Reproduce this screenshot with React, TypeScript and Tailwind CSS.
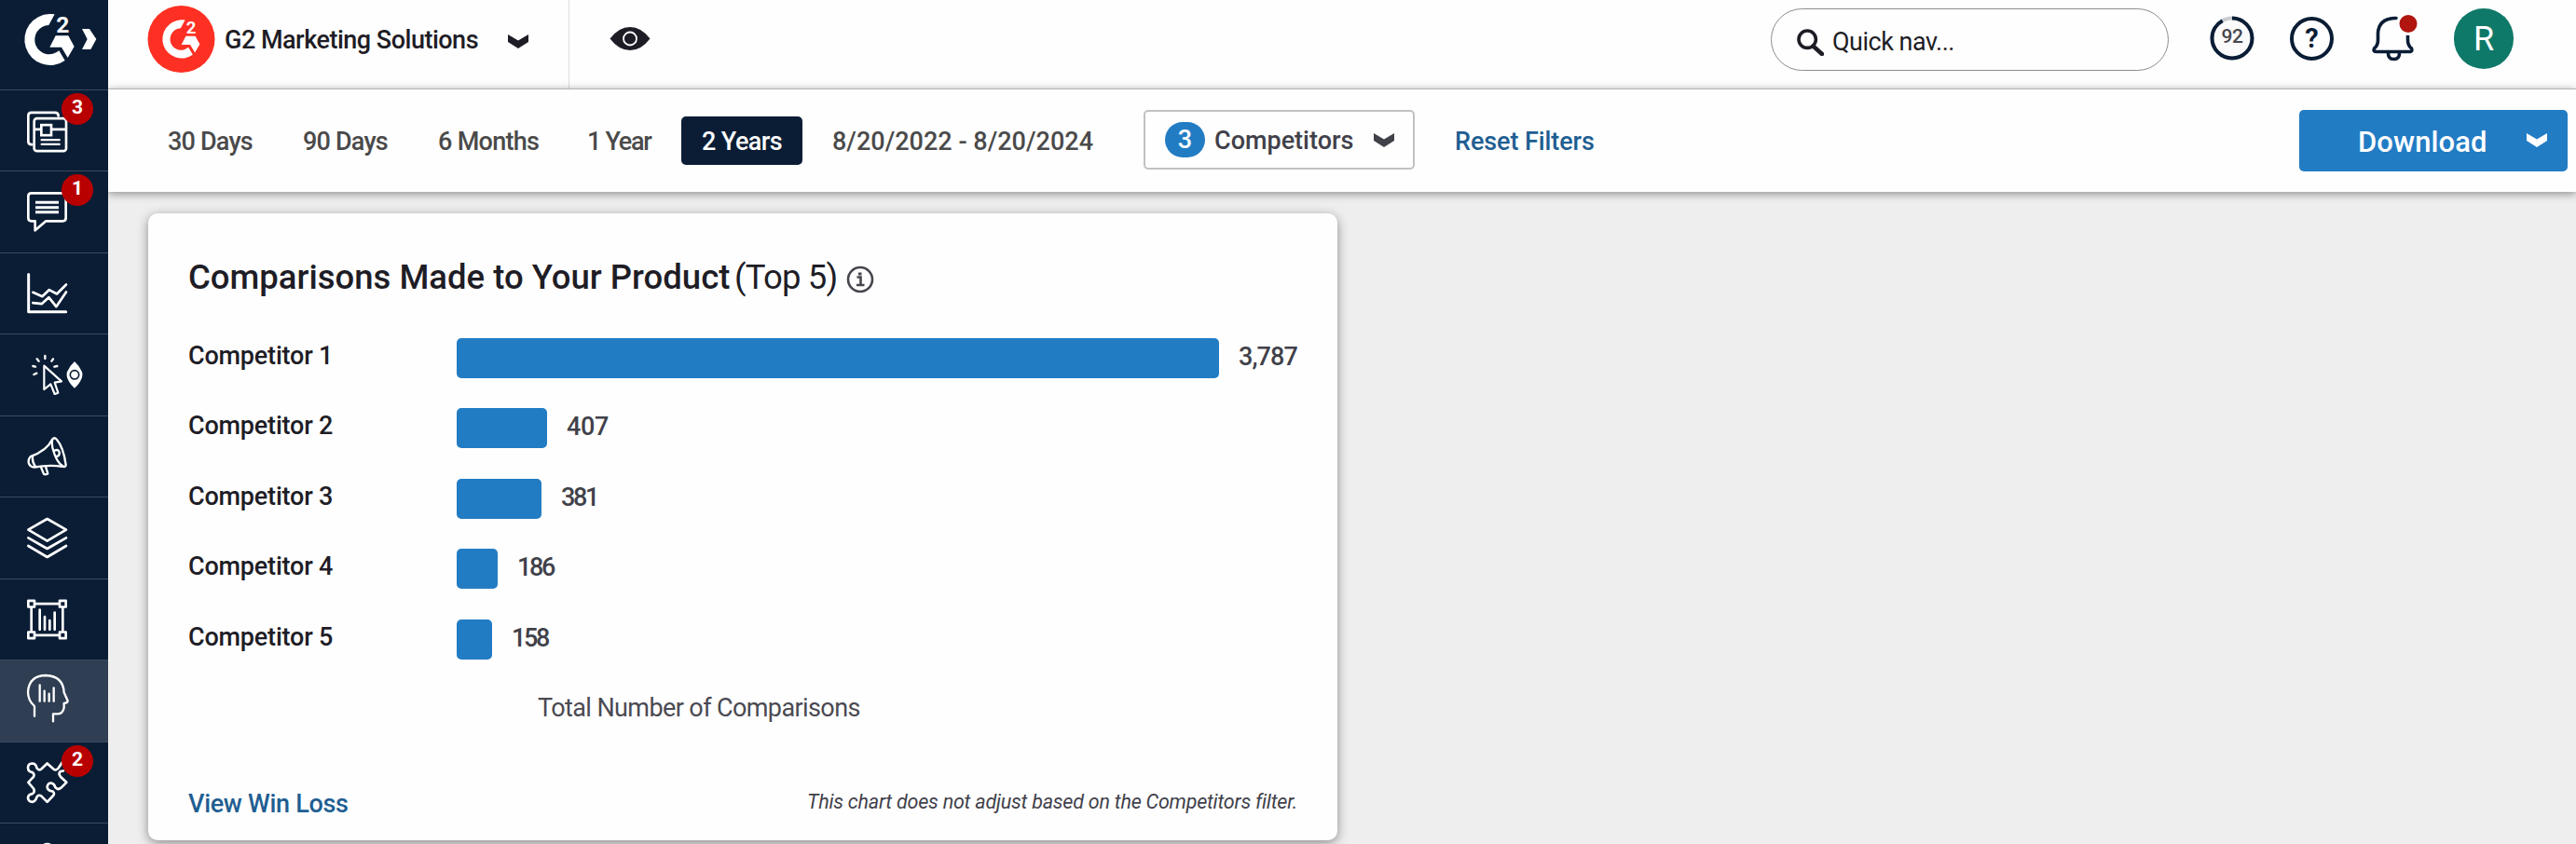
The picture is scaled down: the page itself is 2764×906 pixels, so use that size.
import React from "react";

type Kids = { children?: React.ReactNode };

const G2Mark = () => (
  <g fill="#fff">
    <path d="M176 45.5 L157 81 A47 47 0 1 0 190 163 L209 195 A82.5 82.5 0 1 1 160 45 Z" />
    <path d="M179 115 H220 L239 150 L218 186 L198 152 H160 Z" />
    <text x="181" y="104" fontFamily="Roboto" fontWeight="700" fontSize="74">2</text>
  </g>
);

const Chevron = ({ className }: { className: string }) => (
  <svg viewBox="0 0 22 15" className={className} fill="currentColor">
    <path d="M0 0 L11 6.5 L22 0 V8 L11 15 L0 8 Z" />
  </svg>
);

const line = {
  fill: "none",
  stroke: "#fff",
  strokeWidth: 8,
  strokeLinecap: "round" as const,
  strokeLinejoin: "round" as const,
};

const Item = ({ y, badge, active, children }: { y: number; badge?: string; active?: boolean } & Kids) => (
  <div className={`relative h-[87.5px] shrink-0 border-b border-[#3b4a5e] ${active ? "bg-[#2f3e53]" : ""}`}>
    <svg viewBox={`0 ${y} 348 262.5`} className="block h-[87.5px] w-[116px]">
      <g {...line}>{children}</g>
    </svg>
    {badge && (
      <span className="absolute left-[66px] top-[3px] flex h-[34px] w-[34px] items-center justify-center rounded-full bg-[#b90000] pb-[3px] text-[21px] leading-none font-bold text-white">
        {badge}
      </span>
    )}
  </div>
);

const Sidebar = () => (
  <nav className="flex h-[906px] w-[116px] shrink-0 flex-col overflow-hidden bg-[#0a1d35]">
    <div className="h-[96.5px] shrink-0 border-b border-[#3b4a5e]">
      <svg viewBox="0 0 348 288" className="block h-[96px] w-[116px]">
        <G2Mark />
        <path d="M264 93 H288 L310 126 L292 159 H264 L281 126 Z" fill="#fff" />
      </svg>
    </div>
    <Item y={289.5} badge="3">
      <path d="M103 464 H101 Q91 464 91 454 V371 Q91 361 101 361 H177 Q188 361 188 372" />
      <rect x="110" y="380" width="103" height="105" rx="9" />
      <path d="M112 415 H130 M168 415 H212" strokeLinecap="butt" />
      <rect x="133" y="401" width="32" height="33" strokeLinejoin="miter" />
      <path d="M134 449 H191 M134 463 H191" strokeWidth="7" />
    </Item>
    <Item y={552} badge="1">
      <path d="M101 622 H202 Q212 622 212 632 V702 Q212 712 202 712 H148 L113 742 V712 H101 Q91 712 91 702 V632 Q91 622 101 622 Z" />
      <path d="M114 652 H189 M114 668 H189 M114 683 H189" strokeLinecap="butt" strokeWidth="9" />
    </Item>
    <Item y={814.5}>
      <g transform="translate(0 810)">
        <path d="M92 72 V193 H212" strokeWidth="9" />
        <path d="M106 130 L136 143 L158 122 L183 135 L213 105 M106 164 L134 167 L157 146 L181 176 L213 129" />
      </g>
    </Item>
    <Item y={1077}>
      <g transform="translate(0 810)">
        <path d="M142 368 L198 418 L176 422 L187 455 L176 459 L163 427 L142 444 Z" strokeWidth="6.5" />
        <path d="M145 336 V345 M119 346 L125 353 M171 346 L166 353 M106 369 L114 371 M184 369 L175 371 M109 396 L118 392" strokeWidth="7" />
        <path d="M240 354 Q256 368 264 388 Q267 397 264 406 Q256 427 240 440 Q224 427 216 406 Q213 397 216 388 Q224 368 240 354 Z" fill="#fff" stroke="none" />
        <circle cx="240" cy="397" r="14" stroke="#0a1d35" strokeWidth="5" />
      </g>
    </Item>
    <Item y={1339.5}>
      <g transform="translate(0 810)" strokeWidth="7">
        <path d="M171 601 Q176 597 182 603 Q204 628 212 685 Q212 693 204 691 Q181 679 169 630 Q165 608 171 601 Z" />
        <path d="M168 604 Q151 640 98 659 Q89 670 93 682 Q99 694 111 693 Q160 684 200 691" />
        <path d="M105 658 Q103 678 114 691 M175 640 Q188 633 191 645 Q193 656 183 658 M132 693 L141 715 Q145 718 154 714 L147 691" />
      </g>
    </Item>
    <Item y={1602}>
      <path d="M152 1671 L213 1706 L152 1742 L91 1706 Z M91 1732 L152 1767 L213 1732 M91 1758 L152 1794 L213 1758" />
    </Item>
    <Item y={1864.5}>
      <g transform="translate(0 1758)">
        <path d="M114 185 H190 M114 286 H190 M101 199 V273 M202 199 V273" />
        <g strokeLinejoin="round">
          <rect x="91" y="175" width="20" height="20" />
          <rect x="192" y="175" width="20" height="20" />
          <rect x="91" y="276" width="20" height="20" />
          <rect x="192" y="276" width="20" height="20" />
        </g>
        <path d="M128 204 V268 M144 227 V268 M160 239 V268 M176 213 V268" />
      </g>
    </Item>
    <Item y={2127} active>
      <g transform="translate(0 1758)" strokeWidth="7">
        <path d="M111 548 V516 Q90 497 90 470 Q94 417 148 417 Q204 420 206 472 L218 499 Q218 506 206 507 V520 Q203 541 185 541 H171 V565" />
        <path d="M128 448 V500 M143 467 V500 M158 476 V500 M173 457 V500" />
      </g>
    </Item>
    <Item y={2389.5} badge="2">
      <path
        transform="translate(0 1758)"
        d="M200 696 L188 714 Q180 724 172 717 L152 699 L133 717 Q124 724 118 713 Q116 699 103 699 Q90 700 90 713 Q91 726 102 727 Q113 732 108 742 L91 760 L108 780 Q114 791 104 797 Q90 799 90 811 Q92 823 104 823 Q115 822 118 808 Q124 797 134 805 L152 823 L170 804 Q178 796 170 789 Q152 787 152 774 Q154 762 165 762 Q175 764 178 776 Q186 786 196 778 L214 760 L197 744 Q186 733 194 725 L204 723"
      />
    </Item>
    <Item y={2652}>
      <circle cx="152" cy="2736" r="18" />
    </Item>
  </nav>
);

const Header = () => (
  <header className="flex h-[95px] w-full items-start bg-[#fefefe] text-[#1e1d26]">
    <svg viewBox="0 0 72 72" className="mt-[6px] ml-[42px] h-[72px] w-[73px] shrink-0">
      <circle cx="36" cy="36" r="36" fill="#fe3023" />
      <g transform="translate(-3.9 4.1) scale(0.25)">
        <G2Mark />
      </g>
    </svg>
    <div className="mt-[23px] ml-[10px] w-[305px] text-[27px] leading-10 font-medium tracking-[-0.5px] whitespace-nowrap">
      G2 Marketing Solutions
    </div>
    <Chevron className="mt-[37px] -ml-[1px] h-[15px] w-[22px] shrink-0" />
    <div className="ml-[43px] h-[95px] w-px shrink-0 bg-[#dddddf]" />
    <svg viewBox="0 0 44 25" className="mt-[29px] ml-[43px] h-[25px] w-[44px] shrink-0">
      <path d="M0.5 12.5 Q10 0 22 0 Q34 0 43.5 12.5 Q34 25 22 25 Q10 25 0.500 12.5 Z" fill="#1e1d26" />
      <circle cx="22" cy="12.5" r="7" fill="none" stroke="#fff" strokeWidth="1.8" />
    </svg>
    <div className="mt-[9px] ml-auto flex h-[67px] w-[427px] shrink-0 items-center rounded-full border border-[#8d8d8f] pl-[27px]">
      <svg viewBox="0 0 29 29" className="mt-[5px] h-[29px] w-[29px]" fill="none" stroke="#1e1d26">
        <circle cx="11.200" cy="11.200" r="9.200" strokeWidth="3.600" />
        <path d="M17.500 18.500 L27 27" strokeWidth="4.500" strokeLinecap="round" />
      </svg>
      <span className="mt-[4px] ml-[9px] text-[27px] leading-10 tracking-[-0.5px]">Quick nav...</span>
    </div>
    <div className="relative mt-[17px] ml-[44px] h-[48px] w-[48px] shrink-0">
      <svg viewBox="0 0 48 48" className="h-[48px] w-[48px]" fill="none">
        <circle cx="24" cy="24" r="21.500" stroke="#c9cdd2" strokeWidth="4" fill="#fafafa" />
        <circle cx="24" cy="24" r="21.500" stroke="#0a1d35" strokeWidth="4" pathLength="100" strokeDasharray="92 8" transform="rotate(-90 24 24)" />
      </svg>
      <span className="absolute inset-0 flex items-center justify-center pb-[3px] text-[21px] leading-none font-medium tracking-[-0.5px] text-[#46464e]">92</span>
    </div>
    <div className="mt-[18px] ml-[38px] flex h-[47px] w-[47px] shrink-0 items-center justify-center rounded-full border-4 border-[#0a1d35] text-[29px] leading-none font-bold text-[#0a1d35]">
      ?
    </div>
    <svg viewBox="0 0 54 56" className="mt-[14px] ml-[39px] h-[56px] w-[54px] shrink-0" fill="none" stroke="#0a1d35" strokeWidth="3.600" strokeLinecap="round" strokeLinejoin="round">
      <path d="M28 5.500 H26 Q9 6.500 8.500 22 V29 Q8.500 35 4.500 38 Q3 41.500 7 41.500 H43 Q46 41 44.500 38 Q40.500 35 40.500 29 V22" />
      <path d="M19.500 42 Q19 49.500 25.500 49.500 Q32 49.500 31.500 42" />
      <circle cx="41" cy="11.500" r="11" fill="#b01510" stroke="#fefefe" strokeWidth="3" />
    </svg>
    <div className="mt-[9px] mr-[67px] ml-[36px] flex h-[65px] w-[64px] shrink-0 items-center justify-center rounded-full bg-[#0f7969] text-[36px] leading-none text-white">
      R
    </div>
  </header>
);

const Filters = () => (
  <div className="relative z-10 flex h-[111px] w-full items-center border-t border-[#b2b4b6] bg-[#fefefe] pb-px text-[27px] leading-10 font-medium whitespace-nowrap text-[#4a4a4a] shadow-[0_2px_9px_rgba(0,0,0,0.42)]">
    <span className="mt-[2px] ml-[64px] w-[145px] shrink-0 tracking-[-0.8px]">30 Days</span>
    <span className="mt-[2px] w-[145px] shrink-0 tracking-[-0.8px]">90 Days</span>
    <span className="mt-[2px] w-[160px] shrink-0 tracking-[-0.7px]">6 Months</span>
    <span className="mt-[2px] w-[101px] shrink-0 tracking-[-1.3px]">1 Year</span>
    <span className="flex h-[52px] w-[130px] shrink-0 items-center justify-center rounded-[5px] bg-[#0a1d35] pt-[2px] tracking-[-0.6px] text-white">2 Years</span>
    <span className="mt-[2px] ml-[32px] w-[334px] shrink-0 tracking-[0.02px]">8/20/2022 - 8/20/2024</span>
    <button className="-mt-[2px] flex h-[64px] w-[291px] shrink-0 items-center rounded-[5px] border-2 border-[#c1c1c4] text-[#41414a]">
      <span className="ml-[21px] flex h-[38px] w-[43px] items-center justify-center rounded-full bg-[#227cc4] pt-px text-white">3</span>
      <span className="mt-[2px] ml-[10px] w-[149px]">Competitors</span>
      <Chevron className="mt-[2px] ml-[22px] h-[15px] w-[22px]" />
    </button>
    <a className="mt-[2px] ml-[43px] tracking-[-0.1px] text-[#1f5e92]">Reset Filters</a>
    <button className="mr-[9px] ml-auto flex h-[66px] w-[288px] shrink-0 items-center rounded-[5px] bg-[#227cc4] text-white">
      <span className="mt-[4px] ml-[63px] w-[139px] text-left text-[31px] tracking-[0.1px]">Download</span>
      <Chevron className="ml-[42px] h-[15px] w-[22px]" />
    </button>
  </div>
);

const rows = [
  { n: "Competitor 1", v: "3,787", w: 818, t: "tracking-[-0.9px]" },
  { n: "Competitor 2", v: "407", w: 97, t: "tracking-[-0.3px]" },
  { n: "Competitor 3", v: "381", w: 91, t: "tracking-[-2.4px]" },
  { n: "Competitor 4", v: "186", w: 44, t: "tracking-[-2.4px]" },
  { n: "Competitor 5", v: "158", w: 38, t: "tracking-[-2.4px]" },
];

const Card = () => (
  <section className="mt-[23px] ml-[43px] flex h-[673px] w-[1276px] shrink-0 flex-col rounded-[10px] bg-[#fefefe] pl-[43px] shadow-[0_3px_12px_rgba(0,0,0,0.42)]">
    <h2 className="mt-[45px] flex h-12 items-center text-[36.5px] leading-12 font-medium whitespace-nowrap text-[#1e1d26]">
      <span className="w-[586px]">Comparisons Made to Your Product</span>
      <span className="w-[120px] font-normal tracking-[-0.8px]">(Top 5)</span>
      <svg viewBox="0 0 30 30" className="mt-[3px] h-[30px] w-[30px]" fill="none" stroke="#46464e">
        <circle cx="15" cy="15" r="13" strokeWidth="2.600" />
        <path d="M11.500 12.500 H15.500 V20.500 M11 21 H19.500" strokeWidth="2.600" />
        <rect x="13" y="7.500" width="3.500" height="3" fill="#46464e" stroke="none" />
      </svg>
    </h2>
    <div className="mt-[40.8px] flex flex-col gap-[32.5px]">
      {rows.map((r) => (
        <div key={r.n} className="flex h-[43px] items-center text-[27px] leading-[38px] font-medium">
          <span className="w-[288px] pb-[5px] tracking-[-0.2px] text-[#1e1d26]">{r.n}</span>
          <div className="h-[43px] rounded-[5px] bg-[#227cc4]" style={{ width: r.w }} />
          <span className={`ml-[21px] pb-[3px] text-[#41414a] ${r.t}`}>{r.v}</span>
        </div>
      ))}
    </div>
    <div className="mt-[32px] ml-[375px] text-[27px] leading-10 tracking-[-0.6px] text-[#4a4a52]">Total Number of Comparisons</div>
    <div className="mt-[63.4px] flex items-center justify-between pr-[43px]">
      <a className="text-[27px] leading-10 font-medium tracking-[-0.3px] text-[#1f5e92]">View Win Loss</a>
      <em className="pb-[4px] text-[21.5px] leading-8 tracking-[-0.22px] text-[#41414a]">
        This chart does not adjust based on the Competitors filter.
      </em>
    </div>
  </section>
);

export default function App() {
  return (
    <div className="flex h-[906px] w-[2764px] overflow-hidden bg-[#eeeeee] font-[Roboto,sans-serif]">
      <Sidebar />
      <main className="flex h-[906px] w-[2648px] flex-col overflow-hidden">
        <Header />
        <Filters />
        <Card />
      </main>
    </div>
  );
}
